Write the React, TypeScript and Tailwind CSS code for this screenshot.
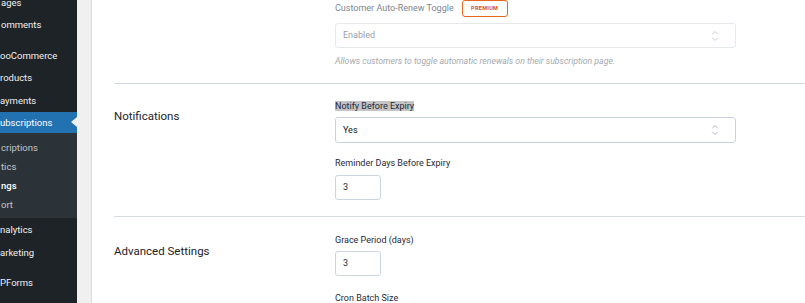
import React from "react";

const font = { fontFamily: 'Roboto, "Liberation Sans", sans-serif' };

function UpDown({ color = "#b4bcc8" }: { color?: string }) {
  return (
    <svg width="8" height="12" viewBox="0 0 8 12" fill="none" stroke={color} strokeWidth="1" strokeLinecap="round" strokeLinejoin="round">
      <path d="M1.5 4 L4 1.5 L6.5 4" />
      <path d="M1.5 8 L4 10.5 L6.5 8" />
    </svg>
  );
}

function Sidebar() {
  return (
    <div className="w-[77px] shrink-0 bg-[#1d2327] overflow-hidden text-[9.5px] text-[#f0f0f1] leading-none whitespace-nowrap">
      <div className="mt-[-9px] h-[23px] flex items-center pl-[1px]">ages</div>
      <div className="h-[22px] flex items-center pl-[1px]">omments</div>
      <div className="h-[9px]" />
      <div className="h-[22px] flex items-center">ooCommerce</div>
      <div className="h-[22px] flex items-center">roducts</div>
      <div className="h-[23px] flex items-center">ayments</div>
      <div className="relative h-[21px] flex items-center bg-[#2271b1] text-white">
        ubscriptions
        <span className="absolute right-0 top-[5px] w-0 h-0 border-y-[5px] border-y-transparent border-r-[6px] border-r-[#f0f0f1]" />
      </div>
      <div className="bg-[#2c3338] pt-[5px] pb-[4px] text-[#c3c4c7]">
        <div className="h-[19px] flex items-center pl-[1px]">criptions</div>
        <div className="h-[19px] flex items-center pl-[1px]">tics</div>
        <div className="h-[19px] flex items-center pl-[1px] text-white font-medium">ngs</div>
        <div className="h-[19px] flex items-center pl-[1px]">ort</div>
      </div>
      <div className="h-[23px] flex items-center">nalytics</div>
      <div className="h-[23px] flex items-center">arketing</div>
      <div className="h-[8px]" />
      <div className="h-[22px] flex items-center">PForms</div>
    </div>
  );
}

function Label({ children, className = "" }: { children: React.ReactNode; className?: string }) {
  return <div className={"h-[12px] leading-[12px] text-[9px] text-[#1f2937] " + className}>{children}</div>;
}

function NumInput({ value, className = "" }: { value: string; className?: string }) {
  return (
    <div className={"w-[46px] h-[25px] border border-[#cbd5e1] rounded-[3px] flex items-center pl-[7px] text-[9px] text-[#1f2937] " + className}>
      {value}
    </div>
  );
}

export default function App() {
  return (
    <div className="flex w-[805px] h-[303px] overflow-hidden bg-white" style={font}>
      <Sidebar />
      <div className="w-[15px] shrink-0 bg-[#f0f0f1] border-r border-[#dcdcde]" />
      <div className="flex-1 min-w-0 bg-white pl-[22px] flex flex-col">
        {/* top partial section */}
        <div className="flex pb-[16px]">
          <div className="w-[221px] shrink-0" />
          <div className="flex flex-col">
            <div className="h-[17px] flex items-center">
              <span className="text-[9px] text-[#80868e]">Customer Auto-Renew Toggle</span>
              <span className="ml-[8px] h-[17px] w-[46px] border border-[#e8671e] rounded-[3px] flex items-center justify-center text-[5.5px] font-bold tracking-[0.3px] text-[#d4530f]">
                PREMIUM
              </span>
            </div>
            <div className="mt-[6px] w-[401px] h-[25px] border border-[#e5e9ef] rounded-[3px] flex items-center justify-between pl-[7px] pr-[16px] text-[9px] text-[#9aa0a8]">
              <span>Enabled</span>
              <UpDown color="#c7ccd4" />
            </div>
            <div className="mt-[7px] h-[12px] leading-[12px] text-[8.7px] italic text-[#a4a9b0]">
              Allows customers to toggle automatic renewals on their subscription page.
            </div>
          </div>
        </div>
        <div className="border-t border-[#d3dae3]" />
        {/* Notifications */}
        <div className="flex pt-[16px] pb-[16px]">
          <div className="w-[221px] shrink-0 pt-[8px] text-[11.5px] leading-[16px] text-[#1d2327]">Notifications</div>
          <div className="flex flex-col">
            <Label>
              <span className="bg-[#c4c4c4]">Notify Before Expiry</span>
            </Label>
            <div className="mt-[5px] w-[401px] h-[26px] border border-[#c9d3df] rounded-[3px] flex items-center justify-between pl-[7px] pr-[16px] text-[9px] text-[#111827]">
              <span className="mt-[1px]">Yes</span>
              <UpDown color="#aab3c0" />
            </div>
            <Label className="mt-[14px]">Reminder Days Before Expiry</Label>
            <NumInput value="3" className="mt-[6px]" />
          </div>
        </div>
        <div className="border-t border-[#d3dae3]" />
        {/* Advanced */}
        <div className="flex pt-[17px]">
          <div className="w-[221px] shrink-0 pt-[9px] text-[11.5px] leading-[16px] text-[#1d2327]">Advanced Settings</div>
          <div className="flex flex-col">
            <Label>Grace Period (days)</Label>
            <NumInput value="3" className="mt-[5px]" />
            <Label className="mt-[16px]">Cron Batch Size</Label>
          </div>
        </div>
      </div>
    </div>
  );
}
